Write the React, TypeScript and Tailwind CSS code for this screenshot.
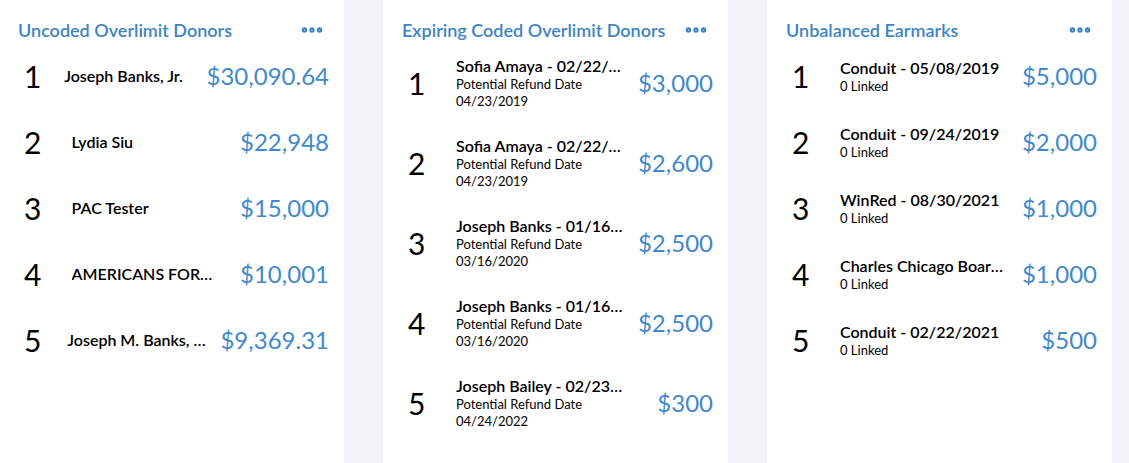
import { MoreHorizontal } from "lucide-react";

type Donor = { name: string; amount: string };
type Expiring = { name: string; date: string; amount: string };
type Earmark = { name: string; linked: string; amount: string };

const uncoded: Donor[] = [
  { name: "Joseph Banks, Jr.", amount: "$30,090.64" },
  { name: "Lydia Siu", amount: "$22,948" },
  { name: "PAC Tester", amount: "$15,000" },
  { name: "AMERICANS FOR PROSPERITY ACTION", amount: "$10,001" },
  { name: "Joseph M. Banks, Sr.", amount: "$9,369.31" },
];

const expiring: Expiring[] = [
  { name: "Sofia Amaya - 02/22/2019", date: "04/23/2019", amount: "$3,000" },
  { name: "Sofia Amaya - 02/22/2019", date: "04/23/2019", amount: "$2,600" },
  { name: "Joseph Banks - 01/16/2020", date: "03/16/2020", amount: "$2,500" },
  { name: "Joseph Banks - 01/16/2020", date: "03/16/2020", amount: "$2,500" },
  { name: "Joseph Bailey - 02/23/2022", date: "04/24/2022", amount: "$300" },
];

const earmarks: Earmark[] = [
  { name: "Conduit - 05/08/2019", linked: "0 Linked", amount: "$5,000" },
  { name: "Conduit - 09/24/2019", linked: "0 Linked", amount: "$2,000" },
  { name: "WinRed - 08/30/2021", linked: "0 Linked", amount: "$1,000" },
  { name: "Charles Chicago Board of Trade", linked: "0 Linked", amount: "$1,000" },
  { name: "Conduit - 02/22/2021", linked: "0 Linked", amount: "$500" },
];

const Card = ({ title, children }: { title: string; children: React.ReactNode }) => (
  <section className="w-[345px] shrink-0 bg-white pl-[19px] pr-[15px] pt-[17px] first:ml-[-1px]">
    <div className="flex h-[26px] items-center justify-between pr-[4px]">
      <h2 className="text-[18px] font-semibold leading-[24px] text-[#3d84c6]">{title}</h2>
      <MoreHorizontal size={26} strokeWidth={3} className="text-[#3d84c6]" />
    </div>
    {children}
  </section>
);

const Amount = ({ value, pad }: { value: string; pad: string }) => (
  <span className={`ml-auto shrink-0 whitespace-nowrap text-[24px] leading-[30px] text-[#4189cb] ${pad}`}>
    {value}
  </span>
);

export default function App() {
  return (
    <div
      className="flex h-[463px] gap-[39px] overflow-hidden bg-[#f2f3f7]"
      style={{ fontFamily: "Lato, 'Noto Sans', sans-serif" }}
    >
      <Card title="Uncoded Overlimit Donors">
        {uncoded.map((d, i) => (
          <div key={i} className="flex h-[66px] items-center">
            <span className="min-w-0 flex-[220_1_0%] pl-[6px] text-[30px] leading-[36px] text-black">{i + 1}</span>
            <div className="min-w-0 flex-[780_1_0%]">
              <span className="block max-w-[143px] truncate text-[16px] font-semibold leading-[20px] text-black">
                {d.name}
              </span>
            </div>
            <Amount value={d.amount} pad="" />
          </div>
        ))}
      </Card>

      <Card title="Expiring Coded Overlimit Donors">
        {expiring.map((d, i) => (
          <div key={i} className="flex h-[80px] items-center">
            <span className="w-[54px] shrink-0 pl-[6px] text-[30px] leading-[36px] text-black">{i + 1}</span>
            <div className="flex w-[168px] min-w-0 shrink flex-col text-black">
              <span className="truncate text-[16px] font-semibold leading-[20px]">{d.name}</span>
              <span className="text-[13px] leading-[17px]">Potential Refund Date</span>
              <span className="text-[13px] leading-[17px]">{d.date}</span>
            </div>
            <Amount value={d.amount} pad="pl-[12px]" />
          </div>
        ))}
      </Card>

      <Card title="Unbalanced Earmarks">
        {earmarks.map((d, i) => (
          <div key={i} className="flex h-[66px] items-center">
            <span className="w-[54px] shrink-0 pl-[6px] text-[30px] leading-[36px] text-black">{i + 1}</span>
            <div className="flex w-[168px] min-w-0 shrink flex-col text-black">
              <span className="truncate text-[16px] font-semibold leading-[20px]">{d.name}</span>
              <span className="text-[13px] leading-[17px]">{d.linked}</span>
            </div>
            <Amount value={d.amount} pad="pl-[12px]" />
          </div>
        ))}
      </Card>
    </div>
  );
}
